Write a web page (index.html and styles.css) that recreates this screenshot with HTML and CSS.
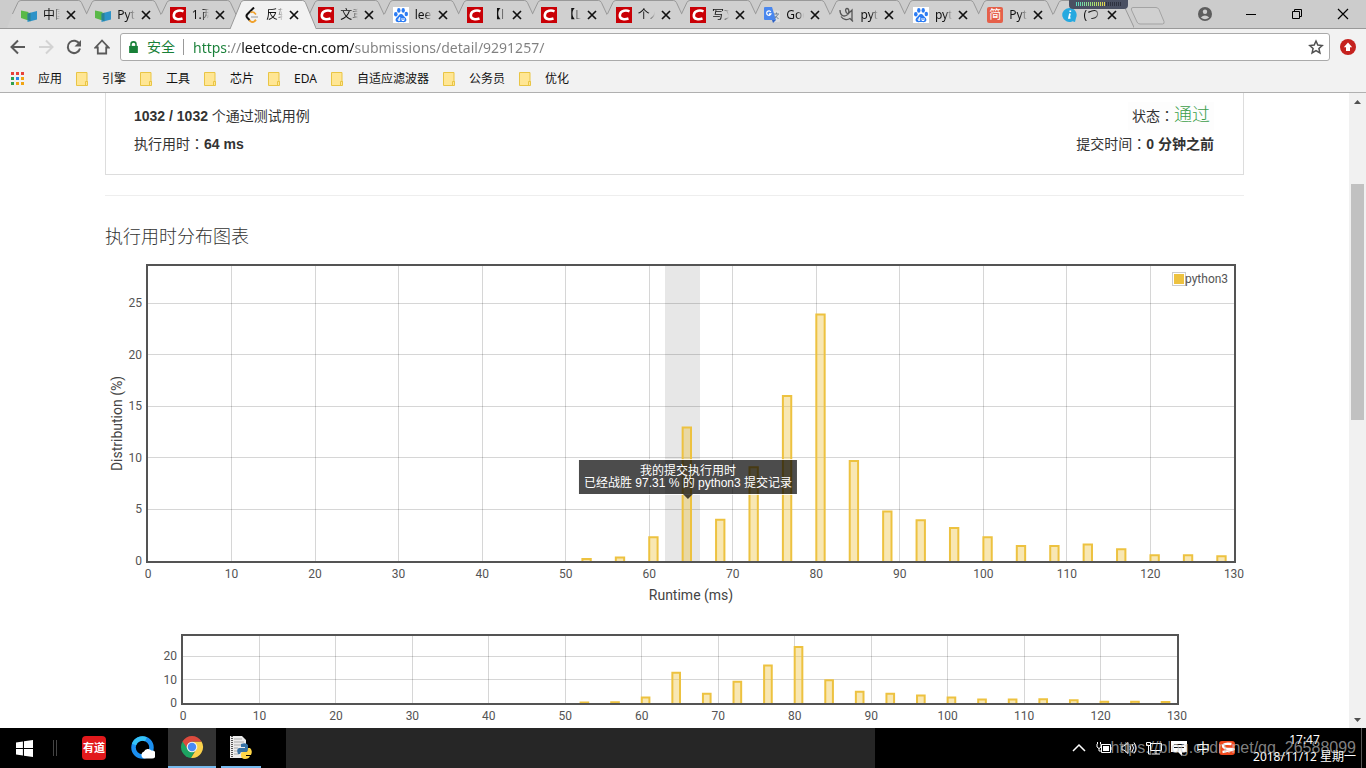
FILE: index.html
```html
<!DOCTYPE html>
<html lang="zh-CN">
<head>
<meta charset="utf-8">
<title>反转 - 提交记录</title>
<link rel="stylesheet" href="styles.css">
</head>
<body>
<svg class="defs" aria-hidden="true">
  <symbol id="i-mooc" viewBox="0 0 16 16"><path d="M0 3.500l7.500 1.500v8.500L0 11z" fill="#59b947"/><path d="M6.500 6.500L16 4v8.500L6.500 15z" fill="#2e93c8"/><path d="M6.500 6.500l3-1v9l-3-2z" fill="#28735a" opacity=".5"/></symbol>
  <symbol id="i-csdn" viewBox="0 0 16 16"><path d="M0 0h16v16H0z" fill="#c90006"/><path d="M13.500 4.300C11 3.300 4.500 2.800 3.800 8c-.5 5 5.700 4.500 8.700 3.500" fill="none" stroke="#fff" stroke-width="2.500"/></symbol>
  <symbol id="i-leet" viewBox="0 0 16 16"><path d="M5 13l1.500 1.300q2 1.500 4 0l1.500-1.600" fill="none" stroke="#f0a22e" stroke-width="2"/><path d="M10 .500L3.500 7q-2 2 0 4l2 2" fill="none" stroke="#111" stroke-width="2"/><path d="M6.500 5.500q2-1 3.500 0l2 2" fill="none" stroke="#f0a22e" stroke-width="1.700"/><path d="M7 10h7" fill="none" stroke="#b5b5b5" stroke-width="1.500"/></symbol>
  <symbol id="i-baidu" viewBox="0 0 16 16"><path d="M0 0h16v16H0z" fill="#fff"/><g fill="#2c7cf3"><ellipse cx="2.800" cy="7.300" rx="1.800" ry="2.300"/><ellipse cx="5.800" cy="3.400" rx="1.700" ry="2.400"/><ellipse cx="10.200" cy="3.400" rx="1.700" ry="2.400"/><ellipse cx="13.300" cy="7" rx="1.700" ry="2.300"/><path d="M8 7c2 0 2.500 2 4 3.300 2.500 2 1.500 5-1.300 5-1.700-.3-3.700-.3-5.400 0-2.800 0-3.800-3-1.300-5C5.500 9 6 7 8 7z"/></g><path d="M6.700 10v3.500H5.500q-1.500-1.500 1.200-2M9 11v2.500h2V11" fill="none" stroke="#fff"/></symbol>
  <symbol id="i-translate" viewBox="0 0 16 16"><path d="M6 3.500h9q1 0 1 1V14q0 1-1 1H9z" fill="#dedede"/><path d="M1 0h7l4 13H1q-1 0-1-1V1q0-1 1-1z" fill="#4a87ee"/><path d="M8 13h4l-3 3z" fill="#2f62c5"/><path d="M6.800 5A2.200 2.200 0 1 0 7 6.800H5" fill="none" stroke="#fff" stroke-width="1.200"/><path d="M10 7h5M12.500 5.500V7M14 7.500l-3.500 4M11.500 9l3 3" fill="none" stroke="#6d8097"/></symbol>
  <symbol id="i-nine" viewBox="0 0 16 16"><path d="M1 3c0 6 4 7 7 5s2-6.500 0-6.500-2 4 1 5.500l4-4v10.500M2 9.500c2 3 6 4 9 2l3 3" fill="none" stroke="#555" stroke-width="1.300"/></symbol>
  <symbol id="i-info" viewBox="0 0 16 16"><path d="M7.500 1a7 7 0 1 0 3 13.200L13 15l1-4A7 7 0 0 0 7.500 1z" fill="#26a9e0"/><path d="M8 6.500L7 11h1.500M8.300 3.500v1.500" fill="none" stroke="#fff" stroke-width="1.700"/></symbol>
  <symbol id="i-close" viewBox="0 0 10 10"><path d="M1 1l8 8M9 1L1 9" fill="none" stroke="#111" stroke-width="1.700"/></symbol>
  <symbol id="i-folder" viewBox="0 0 12 14"><path d="M.5.500h10.500V9.500h.5v4H.5z" fill="#ffe694" stroke="#e9c545"/><path d="M9.500 13V9.500h2" fill="none" stroke="#e9c545"/></symbol>
  <symbol id="i-shape" viewBox="0 0 87 28" preserveAspectRatio="none"><path d="M0 28L5.500 14 11 2.500Q12 .500 14 .500H72Q74 .500 75 2.500L87 28z" fill="#d0d0d0"/><path d="M5.500 14L11 2.500Q12 .500 14 .500H72Q74 .500 75 2.500L87 28" fill="none" stroke="#999" vector-effect="non-scaling-stroke"/></symbol>
  <symbol id="i-shape-on" viewBox="0 0 87 29" preserveAspectRatio="none"><path d="M0 29L11 2.500Q12 .500 14 .500H73Q75 .500 76 2.500L87 29" fill="#f2f2f2" stroke="#999" vector-effect="non-scaling-stroke"/></symbol>
</svg>

<header class="browser">
  <div class="tabstrip">
    <nav class="tabs" id="tabs" aria-label="标签页"></nav>
    <div class="window-bar">
      <button class="new-tab" aria-label="新标签页"><svg viewBox="0 0 36 18"><path d="M3 .500h23q2 0 3 2l5 12q.7 2.500-1.500 2.500H10q-2 0-3-2L1.500 3Q.7.500 3 .500z" fill="#d0d0d0" stroke="#a3a3a3"/></svg></button>
      <div class="window-buttons">
        <button aria-label="用户"><svg viewBox="0 0 14 14"><circle cx="7" cy="7" r="7" fill="#5d5d5d"/><circle cx="7" cy="4.800" r="2.200" fill="#ccc"/><path d="M2.800 10.500Q7 6.500 11.200 10.500 7 14 2.800 10.500z" fill="#ccc"/></svg></button>
        <button aria-label="最小化"><svg viewBox="0 0 14 14"><path d="M2 7.500h10" stroke="#000"/></svg></button>
        <button aria-label="还原"><svg viewBox="0 0 14 14"><path d="M2.500 4.500h7v7h-7zM4.500 4.500v-2h7v7h-2" fill="none" stroke="#000"/></svg></button>
        <button aria-label="关闭"><svg viewBox="0 0 14 14"><path d="M2 2l10 10M12 2L2 12" stroke="#000" stroke-width="1.200"/></svg></button>
      </div>
    </div>
    <div class="meter" aria-hidden="true"><span></span></div>
  </div>

  <div class="toolbar">
    <button aria-label="后退"><svg viewBox="0 0 16 16"><path d="M15 8H2M8 1.500L1.500 8 8 14.500" fill="none" stroke="#5a5a5a" stroke-width="2"/></svg></button>
    <button aria-label="前进"><svg viewBox="0 0 16 16"><path d="M1 8h13M8 1.500L14.500 8 8 14.500" fill="none" stroke="#d3d3d3" stroke-width="2"/></svg></button>
    <button aria-label="刷新"><svg viewBox="0 0 16 16"><path d="M13.500 5A6.200 6.200 0 1 0 14 9.500" fill="none" stroke="#5a5a5a" stroke-width="2"/><path d="M15 1v6.500H8.500z" fill="#5a5a5a"/></svg></button>
    <button aria-label="主页"><svg viewBox="0 0 16 16"><path d="M8 1.500L1.500 8.500h2.300v6h8.400v-6h2.300z" fill="none" stroke="#5a5a5a" stroke-width="1.800"/></svg></button>
    <form class="omnibox">
      <svg class="lock" viewBox="0 0 8 11"><path d="M0 4.500h8V11H0z" fill="#188038"/><path d="M1.700 5V3Q1.700.800 4 .800T6.300 3v2" fill="none" stroke="#188038" stroke-width="1.400"/></svg>
      <label for="url">安全</label>
      <input id="url" type="text" value="https://leetcode-cn.com/submissions/detail/9291257/" spellcheck="false">
      <button type="button" aria-label="收藏"><svg viewBox="0 0 16 16"><path d="M8 2l1.800 4.100 4.400.400-3.300 3 1 4.400L8 11.600l-3.900 2.300 1-4.400-3.300-3 4.400-.400z" fill="none" stroke="#505050" stroke-width="1.500"/></svg></button>
    </form>
    <button aria-label="扩展"><svg viewBox="0 0 16 16"><circle cx="8" cy="8" r="8" fill="#c5221f"/><path d="M8 3.500l4.200 4.700H10V12H6V8.200H3.800z" fill="#fff"/></svg></button>
  </div>

  <nav class="bookmarks" aria-label="书签">
    <a href="#"><svg class="apps" viewBox="0 0 13 13"><path d="M0 0h3v3H0zM5 0h3v3H5zM10 0h3v3h-3z" fill="#e8423a"/><path d="M0 5h3v3H0zM0 10h3v3H0z" fill="#2fa04e"/><path d="M5 5h3v3H5z" fill="#2a86e8"/><path d="M10 5h3v3h-3zM5 10h3v3H5zM10 10h3v3h-3z" fill="#f0a514"/></svg>应用</a>
    <a href="#"><svg><use href="#i-folder"/></svg>引擎</a>
    <a href="#"><svg><use href="#i-folder"/></svg>工具</a>
    <a href="#"><svg><use href="#i-folder"/></svg>芯片</a>
    <a href="#"><svg><use href="#i-folder"/></svg>EDA</a>
    <a href="#"><svg><use href="#i-folder"/></svg>自适应滤波器</a>
    <a href="#"><svg><use href="#i-folder"/></svg>公务员</a>
    <a href="#"><svg><use href="#i-folder"/></svg>优化</a>
  </nav>
</header>

<div class="viewport">
  <main class="page">
    <div class="content">
      <section class="summary">
        <div class="row"><p><b>1032 / 1032</b> 个通过测试用例</p><p class="status">状态<i lang="zh-TW">：</i><span>通过</span></p></div>
        <div class="row"><p>执行用时<i lang="zh-TW">：</i><b>64 ms</b></p><p>提交时间<i lang="zh-TW">：</i><b>0 分钟之前</b></p></div>
      </section>
      <hr>
      <h4>执行用时分布图表</h4>
      <div class="chart main-chart">
        <svg id="main-chart" role="img" aria-label="执行用时分布"></svg>
        <div class="tooltip" id="tooltip">我的提交执行用时<br>已经战胜 97.31 % 的 python3 提交记录</div>
      </div>
      <div class="chart overview-chart">
        <svg id="overview-chart" role="img" aria-label="分布概览"></svg>
      </div>
    </div>
  </main>
  <div class="scrollbar" aria-hidden="true">
    <svg viewBox="0 0 17 17"><path d="M5 11h7L8.500 7z" fill="#505050"/></svg>
    <div class="track"><div class="thumb"></div></div>
    <svg viewBox="0 0 17 17"><path d="M5 7h7l-3.500 4z" fill="#505050"/></svg>
  </div>
</div>

<footer class="taskbar">
  <div class="launchers">
    <button class="start" aria-label="开始"><svg viewBox="0 0 16 16"><path d="M0 2.300L6.500 1.400V7.500H0zM7.500 1.200L16 0v7.500H7.500zM0 8.500h6.500v6.100L0 13.700zM7.500 8.500H16V16l-8.500-1.200z" fill="#fff"/></svg></button>
    <span class="grip"></span>
    <button class="youdao">有道</button>
    <button aria-label="QQ浏览器"><svg viewBox="0 0 24 24"><circle cx="11.500" cy="11.500" r="9" fill="none" stroke="#1b8ff0" stroke-width="4.500"/><path d="M3 8.500a9 9 0 0 1 12-5.300" fill="none" stroke="#35c3f7" stroke-width="4.500"/><path d="M13.500 22.500a3.600 3.600 0 0 1-.5-7 4.500 4.500 0 0 1 7.500-1 4 4 0 0 1 .5 8z" fill="#fff"/></svg></button>
    <button class="active" aria-label="Chrome"><svg viewBox="0 0 24 24"><path d="M2.500 6.500a11 11 0 0 0 8.500 16.500l5-8.500-4-2.500z" fill="#1da462"/><path d="M12 6.500h9.500A11 11 0 0 1 11 23l5.500-9z" fill="#fbd14b"/><path d="M2.500 6.500A11 11 0 0 1 21.500 6.500H12L7 13z" fill="#dc4a3d"/><circle cx="12" cy="12" r="5.300" fill="#f2f2f2"/><circle cx="12" cy="12" r="4.200" fill="#4a8af4"/></svg></button>
    <button class="open" aria-label="Python"><svg viewBox="0 0 24 24"><path d="M1 1h12l4 4v18H1z" fill="#ececec"/><path d="M3 1v22" stroke="#555" stroke-width="2" stroke-dasharray="1 1"/><path d="M5 4h8M5 7h10M5 10h8M5 13h4M5 16h4M5 19h5" stroke="#aaa"/><path d="M12 9q5-2 7 1v5q0 2-2 2h-4q-2 0-2 2H9q-2-5 1-6h6v-1h-4z" fill="#3671a3"/><path d="M19 13h2q3 3 1 7h-5v1h4q-1 3-5 3-4-.5-4-3v-2q0-2 2-2h3q2 0 2-4z" fill="#ffd747"/></svg></button>
  </div>
  <div class="task-area"></div>
  <div class="tray">
    <svg viewBox="0 0 16 16"><path d="M2 11l6-6 6 6" fill="none" stroke="#fff" stroke-width="1.500"/></svg>
    <svg viewBox="0 0 16 16"><path d="M5.500 4.500h9v8h-9zM15 7v3M1 4v3q2 3 4 0V4M1.500 2v2M4.500 2v2M3 8v3h2" fill="none" stroke="#fff"/><path d="M7 6h6v5H7z" fill="#fff"/></svg>
    <svg viewBox="0 0 16 16"><path d="M1 6h2l4-3.500v11L3 10H1zM9 6q1.500 2 0 4M11 4q3 4 0 8M13 2.500q4 5.500 0 11" fill="none" stroke="#fff"/></svg>
    <svg viewBox="0 0 16 16"><path d="M4.500 3.500h11v7h-11zM10 11v3M6 14h8M.500 2.500h4v3h-4zM2.500 6v8h3" fill="none" stroke="#fff"/></svg>
    <svg viewBox="0 0 16 16"><path d="M0 1h16v11h-5v4l-4-4H0z" fill="#fff"/><path d="M3 4.500h10M3 7.500h10" stroke="#111"/></svg>
    <span>中</span>
    <svg viewBox="0 0 16 16"><rect y="1" width="16" height="14" rx="3" fill="#f0481c"/><path d="M12.500 4Q4 3 4 6t8 3-8.500 3" fill="none" stroke="#fff" stroke-width="2.300"/></svg>
    <time datetime="2018-11-12T17:47">17:47<br>2018/11/12 星期一</time>
  </div>
  <div class="watermark">https://blog.csdn.net/qq_26588099</div>
</footer>
<script src="script.js"></script>
</body>
</html>
```

FILE: styles.css
```css
* { box-sizing: border-box; }

body {
  margin: 0;
  height: 100vh;
  display: flex;
  flex-direction: column;
  overflow: hidden;
  background: #fff;
  color: #333;
  font: 14px/20px "Liberation Sans", "Noto Sans CJK SC", sans-serif;
}

button {
  padding: 0;
  border: 0;
  background: none;
  color: inherit;
  font: inherit;
}

svg { display: block; flex: none; }
p, h4 { margin: 0; }
.defs { position: absolute; width: 0; height: 0; }

/* Browser frame */
.browser {
  flex: none;
  background: #f2f2f2;
  color: #111;
  font: 12px/16px "Noto Sans", "Noto Sans CJK SC", sans-serif;
}

.tabstrip {
  position: relative;
  display: flex;
  height: 29px;
  padding-left: 7px;
  background: #ccc;
  border-bottom: 1px solid #999;
}

.tabs { display: flex; flex: 1; min-width: 0; }

.tab {
  position: relative;
  display: flex;
  flex: 1 1 0;
  min-width: 0;
  align-items: center;
  padding: 2px 5px 0 14px;
}

.tab-shape {
  position: absolute;
  left: 0;
  top: 0;
  width: calc(100% + 12px);
  height: 28px;
}

.tab.active { z-index: 2; }
.tab.active .tab-shape { height: 29px; }
.tab-icon { position: relative; width: 16px; height: 16px; }

.tab-icon.jian {
  flex: none;
  border-radius: 2px;
  background: #e5604a;
  color: #fff;
  line-height: 16px;
  text-align: center;
}

.tab-title {
  position: relative;
  flex: 1;
  min-width: 0;
  margin: 0 6px;
  overflow: hidden;
  white-space: nowrap;
  -webkit-mask-image: linear-gradient(to right, #000 60%, transparent);
  mask-image: linear-gradient(to right, #000 60%, transparent);
}

.tab-close { position: relative; }
.tab-close svg { width: 10px; height: 10px; }

.window-bar { display: flex; flex: none; width: 244px; }
.new-tab { padding: 3px 0 0 8px; }
.new-tab svg { width: 36px; height: 18px; }
.window-buttons { display: flex; flex: 1; padding-left: 16px; }
.window-buttons button { flex: 1; display: grid; place-items: center; }
.window-buttons svg { width: 14px; height: 14px; }

.meter {
  position: absolute;
  z-index: 3;
  top: 0;
  right: 238px;
  width: 59px;
  height: 9px;
  padding: 2px 6px;
  border-radius: 0 0 4px 4px;
  background: #4a5062;
}

.meter span {
  display: block;
  height: 4px;
  background:
    linear-gradient(to right, #4a5062 50%, transparent 50%) 0 0 / 2px 4px,
    linear-gradient(to right, #55d8c8, #a8e070 40%, #e8d44a 64%, #2e3240 65%);
}

.toolbar {
  display: flex;
  align-items: center;
  gap: 12px;
  height: 36px;
  padding: 0 10px;
}

.toolbar svg { width: 16px; height: 16px; }

.omnibox {
  display: flex;
  flex: 1;
  align-items: center;
  height: 28px;
  margin: 0 -2px;
  padding: 0 5px 0 8px;
  border: 1px solid #aaa;
  border-radius: 3px;
  background: #fff;
}

.omnibox .lock { width: 9px; height: 12px; }

.omnibox label {
  margin-left: 9px;
  padding-right: 8px;
  border-right: 1px solid #999;
  color: #188038;
  font-size: 14px;
}

.omnibox input {
  flex: 1;
  min-width: 0;
  height: 24px;
  padding: 0 0 0 9px;
  border: 0;
  outline: 0;
  background: linear-gradient(to right, #188038 0 44px, #808080 44px 58px, #111 58px 170px, #808080 170px);
  -webkit-background-clip: text;
  background-clip: text;
  color: transparent;
  font: 14px "Noto Sans", sans-serif;
}

.bookmarks {
  display: flex;
  align-items: center;
  gap: 14px;
  height: 28px;
  padding: 0 11px;
  border-bottom: 1px solid #b0b0b0;
}

.bookmarks a {
  display: flex;
  align-items: center;
  gap: 14px;
  color: #111;
  text-decoration: none;
  white-space: nowrap;
}

.bookmarks svg { width: 12px; height: 14px; }
.bookmarks .apps { width: 13px; height: 13px; }

/* Page */
.viewport { display: flex; flex: 1; min-height: 0; }
.page { flex: 1; min-width: 0; overflow: hidden; }
.content { max-width: 1139px; margin: 0 auto; }

.summary {
  padding: 9px 29px 16px 28px;
  border: solid #ddd;
  border-width: 0 1px 1px;
}

.row {
  display: flex;
  justify-content: space-between;
  height: 28px;
  line-height: 28px;
}

.row i {
  font-family: "Noto Sans CJK TC", sans-serif;
  font-style: normal;
  line-height: 20px;
}

.status {
  padding: 0 4px;
  background: #fdfdfd;
}

.status span {
  color: #3c9e4a;
  font-size: 18px;
  font-weight: 300;
  line-height: 20px;
}

hr {
  margin: 20px 0;
  border: 0;
  border-top: 1px solid #eee;
}

h4 {
  padding-top: 9px;
  font-size: 18px;
  font-weight: 300;
  line-height: 24px;
}

.chart { position: relative; }
.chart svg { width: 100%; height: 100%; }
.main-chart { height: 362px; margin-top: 8px; }
.overview-chart { height: 110px; }

.chart text {
  fill: #545454;
  font: 12px Roboto, sans-serif;
}

.chart .axis-title {
  fill: #444;
  font-size: 14px;
}

.tooltip {
  position: absolute;
  top: 203px;
  padding: 5px;
  transform: translateX(-50%);
  background: rgba(0, 0, 0, .7);
  box-shadow: 0 0 0 1px rgba(255, 255, 255, .8), -4px 0 0 rgba(255, 255, 255, .8);
  color: #fff;
  font-size: 12px;
  line-height: 12px;
  text-align: center;
  white-space: nowrap;
}

.tooltip::after {
  content: "";
  position: absolute;
  top: 100%;
  left: 50%;
  margin-left: -5px;
  border: 5px solid transparent;
  border-top-color: rgba(0, 0, 0, .7);
  border-bottom: 0;
}

.scrollbar {
  display: flex;
  flex-direction: column;
  flex: none;
  width: 17px;
  background: #f1f1f1;
}

.scrollbar svg { width: 17px; height: 17px; }
.track { flex: 1; padding: 0 2px; }
.track::before { content: ""; display: block; height: 12.3%; }
.thumb { height: 39.3%; background: #c1c1c1; }

/* Taskbar */
.taskbar {
  position: relative;
  display: flex;
  flex: none;
  height: 40px;
  background: #000;
  color: #fff;
}

.launchers { display: flex; flex: none; width: 286px; }

.launchers button {
  display: grid;
  place-items: center;
  width: 48px;
}

.launchers svg { width: 24px; height: 24px; }
.launchers .start svg { width: 17px; height: 17px; }

.grip {
  width: 4px;
  height: 16px;
  margin: 12px 9px 0 5px;
  border: solid #444;
  border-width: 0 1px;
}

.launchers .youdao {
  width: 24px;
  height: 24px;
  margin: 8px 13px 0 16px;
  border-radius: 4px;
  background: #e2191c;
  font-size: 11px;
  font-weight: 700;
}

.launchers .active {
  margin-left: 1px;
  background: #333;
  border-bottom: 2px solid #76b9ed;
}

.launchers .open {
  width: 40px;
  margin-left: 5px;
  border-bottom: 2px solid #76b9ed;
}

.task-area {
  flex: 0 1 589px;
  background: #262626;
}

.tray {
  display: flex;
  align-items: center;
  gap: 9px;
  margin-left: auto;
  margin-right: 4px;
  padding-right: 5px;
  border-right: 1px solid #555;
  font-family: "Noto Sans", "Noto Sans CJK SC", sans-serif;
}

.tray svg { width: 16px; height: 16px; }

.tray time {
  margin-left: 9px;
  font-size: 12px;
  line-height: 17px;
  text-align: center;
  white-space: nowrap;
}

.watermark {
  position: absolute;
  right: 10px;
  bottom: 8px;
  color: rgba(200, 200, 200, .65);
  font-size: 16px;
  line-height: 24px;
}
```

FILE: script.js
```js
const tabs = [
  ["mooc", "中国大学"], ["mooc", "Python"], ["csdn", "1.两数"], ["leet", "反转"],
  ["csdn", "文章"], ["baidu", "leetcode"], ["csdn", "【l"], ["csdn", "【L"],
  ["csdn", "个人"], ["csdn", "写文"], ["translate", "Google"], ["nine", "python"],
  ["baidu", "python"], ["jian", "Python"], ["info", "(つ"]
];

document.getElementById("tabs").innerHTML = tabs.map(([icon, title], i) => {
  const on = i === 3;
  const image = icon === "jian"
    ? '<span class="tab-icon jian">简</span>'
    : `<svg class="tab-icon"><use href="#i-${icon}"/></svg>`;
  return `<div class="tab${on ? " active" : ""}">
    <svg class="tab-shape"><use href="#i-shape${on ? "-on" : ""}"/></svg>
    ${image}<span class="tab-title">${title}</span>
    <button class="tab-close" aria-label="关闭标签页"><svg><use href="#i-close"/></svg></button>
  </div>`;
}).join("");

// Share of submissions (%) per runtime (ms)
const data = [
  [52, 0.2], [56, 0.35], [60, 2.3], [64, 12.95], [68, 4], [72, 9.1], [76, 16],
  [80, 23.9], [84, 9.7], [88, 4.8], [92, 3.95], [96, 3.2], [100, 2.3], [104, 1.45],
  [108, 1.45], [112, 1.6], [116, 1.15], [120, 0.55], [124, 0.55], [128, 0.45]
];
const X_MAX = 130;
const Y_MAX = 28.6;

function drawChart(svg, o) {
  const width = svg.clientWidth;
  const w = width - o.left - o.right;
  const bottom = o.top + o.height;
  const x = v => o.left + v / X_MAX * w;
  const y = v => bottom - v / Y_MAX * o.height;
  const crisp = v => Math.floor(v) + 0.5;
  let out = "";

  if (o.main) {
    const from = Math.floor(x(62));
    out += `<rect x="${from}" y="${o.top}" width="${Math.ceil(x(66)) - from}" height="${o.height}" fill="#e7e7e7"/>`;
  }
  for (let v = 0; v <= X_MAX; v += 10) {
    if (v && v < X_MAX) {
      out += `<path d="M${crisp(x(v))} ${o.top}V${bottom}" stroke="#000" stroke-opacity=".16"/>`;
    }
    out += `<text x="${x(v)}" y="${bottom + 17}" text-anchor="middle">${v}</text>`;
  }
  for (let v = 0; v < Y_MAX; v += o.step) {
    if (v > 20 && !o.main) break;
    if (v) out += `<path d="M${o.left} ${crisp(y(v))}H${o.left + w}" stroke="#000" stroke-opacity=".16"/>`;
    out += `<text x="${o.left - 6}" y="${Math.round(y(v)) + 4}" text-anchor="end">${v}</text>`;
  }
  for (const [v, share] of data) {
    out += `<path d="M${x(v)} ${bottom}V${y(share)}H${x(v + 1)}V${bottom}" fill="#edc240" fill-opacity=".4" stroke="#edc240" stroke-width="2"/>`;
  }
  out += `<rect x="${o.left - 1}" y="${o.top - 1}" width="${w + 2}" height="${o.height + 2}" fill="none" stroke="#545454" stroke-width="2"/>`;

  if (o.main) {
    const mid = o.top + o.height / 2;
    out += `<text class="axis-title" x="${x(65)}" y="${bottom + 39}" text-anchor="middle">Runtime (ms)</text>
      <text class="axis-title" transform="translate(17 ${mid + 10}) rotate(-90)" text-anchor="middle">Distribution (%)</text>
      <rect x="${width - 71.5}" y="${o.top + 6.5}" width="13" height="13" fill="#fff" stroke="#ccc"/>
      <rect x="${width - 70}" y="${o.top + 8}" width="10" height="10" fill="#edc240"/>
      <text x="${width - 59}" y="${o.top + 17}">python3</text>`;
    document.getElementById("tooltip").style.left = `${Math.round(x(64.5)) + 1}px`;
  }
  svg.innerHTML = out;
}

function render() {
  drawChart(document.getElementById("main-chart"), { main: true, left: 43, right: 10, top: 9, height: 295, step: 5 });
  drawChart(document.getElementById("overview-chart"), { left: 78, right: 67, top: 17, height: 67, step: 10 });
}

render();
window.addEventListener("resize", render);
```
